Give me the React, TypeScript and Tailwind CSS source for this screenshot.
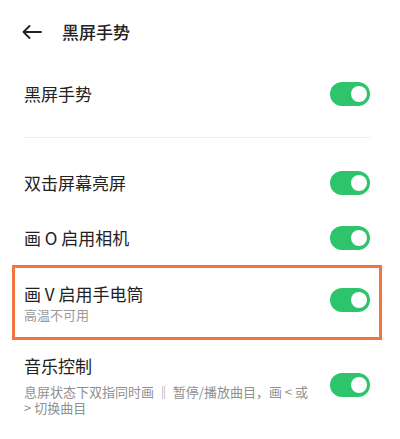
const font = { fontFamily: '"Noto Sans CJK SC", "Noto Sans", sans-serif' };

function Toggle() {
  return (
    <div className="w-10 h-6 rounded-full bg-[#2ec46c] flex items-center justify-end pr-[3px] shrink-0">
      <div className="w-4 h-4 rounded-full bg-white" />
    </div>
  );
}

export default function App() {
  return (
    <div className="w-[400px] h-[439px] bg-white overflow-hidden text-[#222]" style={font}>
      {/* Header */}
      <div className="h-16 flex items-center pl-[22px]">
        <svg width="20" height="14" viewBox="0 0 20 14" fill="none" stroke="#222" strokeWidth="1.8" strokeLinecap="round" strokeLinejoin="round">
          <path d="M19 7H1.5M7.5 1L1.5 7l6 6" />
        </svg>
        <span className="ml-5 text-[17px] font-medium">黑屏手势</span>
      </div>

      {/* Master switch */}
      <div className="h-[60px] flex items-center justify-between pl-6 pr-[30px]">
        <span className="text-[17px]">黑屏手势</span>
        <Toggle />
      </div>
      <div className="mt-[13px] ml-6 mr-[30px] h-px bg-[#eeeeee]" />

      <div className="pt-[17px]">
        <div className="h-14 flex items-center justify-between pl-6 pr-[30px]">
          <span className="text-[17px]">双击屏幕亮屏</span>
          <Toggle />
        </div>
        <div className="h-[54px] flex items-center justify-between pl-6 pr-[30px]">
          <span className="text-[17px]">画 O 启用相机</span>
          <Toggle />
        </div>
      </div>

      {/* Highlighted row */}
      <div className="ml-3 w-[370px] h-[75px] border-[3px] border-[#f2743f] flex items-center justify-between pl-[9px] pr-[9px]">
        <div className="flex flex-col">
          <span className="text-[17px] leading-6">画 V 启用手电筒</span>
          <span className="text-[13px] leading-[18px] text-[#9a9a9a]">高温不可用</span>
        </div>
        <div className="mb-[6px]">
          <Toggle />
        </div>
      </div>

      <div className="mt-[14px] flex items-center justify-between pl-6 pr-[30px]">
        <div className="flex flex-col w-[292px]">
          <span className="text-[17px] leading-6">音乐控制</span>
          <p className="mt-[6px] text-[13px] leading-4 text-[#909090]">
            息屏状态下双指同时画 ‖ 暂停/播放曲目，画 &lt; 或 &gt; 切换曲目
          </p>
        </div>
        <Toggle />
      </div>
    </div>
  );
}
